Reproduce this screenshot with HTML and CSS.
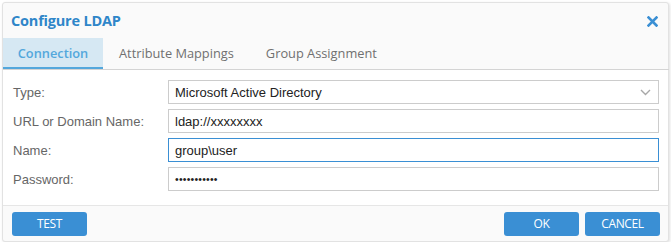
FILE: index.html
```html
<!DOCTYPE html>
<html lang="en">
<head>
    <meta charset="UTF-8">
    <title>Configure LDAP</title>
    <link rel="stylesheet" href="styles.css">
</head>
<body>
    <div class="dialog">
        <header class="dialog-header">
            <h1>Configure LDAP</h1>
            <span class="close">
                <svg width="11" height="11" viewBox="0 0 11 11"><path d="M1.5 1.5 L9.5 9.5 M9.5 1.5 L1.5 9.5" stroke="#3a8fd4" stroke-width="2.6" stroke-linecap="square"/></svg>
            </span>
        </header>

        <nav class="tabs">
            <div class="tab active">Connection</div>
            <div class="tab">Attribute Mappings</div>
            <div class="tab">Group Assignment</div>
        </nav>

        <form class="dialog-body">
            <div class="row">
                <label>Type:</label>
                <div class="field select">
                    <span>Microsoft Active Directory</span>
                    <svg width="11" height="7" viewBox="0 0 11 7"><path d="M1 1 L5.5 5.5 L10 1" fill="none" stroke="#a8a8a8" stroke-width="1.4"/></svg>
                </div>
            </div>
            <div class="row">
                <label>URL or Domain Name:</label>
                <div class="field">ldap://xxxxxxxx</div>
            </div>
            <div class="row">
                <label>Name:</label>
                <div class="field focused">group\user</div>
            </div>
            <div class="row">
                <label>Password:</label>
                <div class="field password">&#8226;&#8226;&#8226;&#8226;&#8226;&#8226;&#8226;&#8226;&#8226;&#8226;&#8226;</div>
            </div>
        </form>

        <footer class="dialog-footer">
            <button class="btn">TEST</button>
            <div class="spacer"></div>
            <button class="btn">OK</button>
            <button class="btn">CANCEL</button>
        </footer>
    </div>
</body>
</html>
```

FILE: styles.css
```css
* {
    margin: 0;
    padding: 0;
    box-sizing: border-box;
}

body {
    background-color: #ffffff;
    padding: 2px 0 0 2px;
    font-family: "Liberation Sans", Arial, sans-serif;
}

.dialog {
    width: 667px;
    height: 240px;
    background-color: #fafafa;
    border: 1px solid #e2e2e2;
    border-radius: 3px;
    box-shadow: 1px 1px 3px rgba(0, 0, 0, 0.12);
    display: flex;
    flex-direction: column;
}

.dialog-header {
    height: 35px;
    display: flex;
    align-items: center;
    justify-content: space-between;
    padding: 0 10px 0 8px;
}

.dialog-header h1 {
    font-family: "Open Sans", sans-serif;
    font-size: 14.5px;
    font-weight: 700;
    color: #2f86c9;
    letter-spacing: -0.2px;
}

.close {
    display: flex;
    margin-top: 2px;
}

.tabs {
    display: flex;
    height: 32px;
    border-bottom: 1px solid #d4d4d4;
    margin-right: -1px;
}

.tab {
    font-family: "Open Sans", sans-serif;
    font-size: 12.8px;
    color: #707070;
    padding: 6px 16px 0 16px;
}

.tab.active {
    width: 100px;
    background-color: #d6e8f3;
    color: #53a7dc;
    font-weight: 600;
    border-bottom: 2px solid #53a7dc;
    text-align: center;
    padding: 6px 0 0 0;
}

.dialog-body {
    background-color: #ffffff;
    padding: 10px 9px 14px 10px;
    display: flex;
    flex-direction: column;
    gap: 5px;
    border-bottom: 1px solid #e6e6e6;
}

.row {
    display: flex;
    align-items: center;
}

.row label {
    width: 155px;
    font-size: 13px;
    color: #666666;
}

.field {
    flex: 1;
    height: 24px;
    border: 1px solid #cccccc;
    background-color: #ffffff;
    font-size: 13px;
    color: #222222;
    padding: 0 6px;
    display: flex;
    align-items: center;
}

.field.focused {
    border-color: #3a8fd4;
}

.field.select {
    justify-content: space-between;
    padding-right: 7px;
}

.field.password {
    font-size: 10.5px;
    letter-spacing: 0.2px;
}

.dialog-footer {
    flex: 1;
    display: flex;
    align-items: center;
    gap: 6px;
    padding: 0 8px 0 9px;
}

.spacer {
    flex: 1;
}

.btn {
    width: 75px;
    height: 24px;
    background-color: #3a8fd4;
    color: #ffffff;
    border: none;
    border-radius: 3px;
    font-family: "Open Sans", sans-serif;
    font-size: 12px;
    letter-spacing: -0.4px;
}
```
